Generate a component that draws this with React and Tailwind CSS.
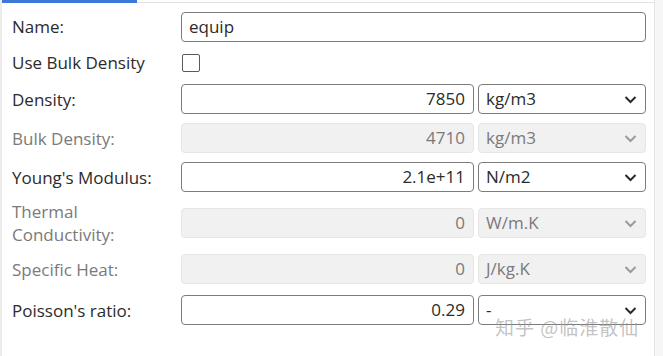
import React from "react";

const rows = [
  { label: "Density:", value: "7850", unit: "kg/m3", enabled: true, mt: "mt-[12px]" },
  { label: "Bulk Density:", value: "4710", unit: "kg/m3", enabled: false, mt: "mt-[9px]" },
  { label: "Young's Modulus:", value: "2.1e+11", unit: "N/m2", enabled: true, mt: "mt-[9px]" },
  { label: ["Thermal", "Conductivity:"], value: "0", unit: "W/m.K", enabled: false, mt: "mt-[16px]" },
  { label: "Specific Heat:", value: "0", unit: "J/kg.K", enabled: false, mt: "mt-[16px]" },
  { label: "Poisson's ratio:", value: "0.29", unit: "-", enabled: true, mt: "mt-[11px]" },
];

function Chevron({ enabled }) {
  return (
    <svg width="13" height="9" viewBox="0 0 13 9" className="shrink-0">
      <path
        d="M1.5 2 L6.5 7 L11.5 2"
        fill="none"
        stroke={enabled ? "#2a2a2a" : "#9a9a9a"}
        strokeWidth="2"
      />
    </svg>
  );
}

function Row({ row }) {
  const on = row.enabled;
  const box = on
    ? "border-[1.5px] border-[#7c7c7c] bg-white text-[#2b2b2b]"
    : "border border-[#e6e6e6] bg-[#f1f1f1] text-[#7a7a7a]";
  return (
    <div className={`flex items-center h-[30px] ${row.mt}`}>
      <div
        className={`w-[169px] shrink-0 leading-[23px] whitespace-nowrap ${
          on ? "text-[#2b2b2b]" : "text-[#7a7a7a]"
        }`}
      >
        {Array.isArray(row.label)
          ? row.label.map((l) => <div key={l}>{l}</div>)
          : row.label}
      </div>
      <div className={`w-[293px] h-[30px] rounded-[4px] flex items-center justify-end pr-[8px] ${box}`}>
        {row.value}
      </div>
      <div className={`ml-[4px] w-[168px] h-[30px] rounded-[4px] flex items-center justify-between pl-[7px] pr-[8px] ${box}`}>
        <span>{row.unit}</span>
        <Chevron enabled={on} />
      </div>
    </div>
  );
}

export default function App() {
  return (
    <div
      className="w-[663px] h-[356px] bg-[#f6f6f6] flex text-[17px] overflow-hidden"
      style={{ fontFamily: '"Open Sans", "Noto Sans", sans-serif' }}
    >
      <div className="relative w-[655px] h-full bg-white border-r border-[#e4e4e4] border-l-[2px] border-l-[#ececec]">
        {/* tab strip line */}
        <div className="flex h-[3px]">
          <div className="w-[135px] bg-[#3b78d8]" />
          <div className="flex-1 border-b border-[#e2e2e2]" />
        </div>

        <div className="pl-[10px] pt-[9px]">
          {/* Name */}
          <div className="flex items-center h-[30px]">
            <div className="w-[169px] shrink-0 text-[#2b2b2b]">Name:</div>
            <div className="w-[465px] h-[30px] rounded-[4px] border-[1.5px] border-[#7c7c7c] flex items-center pl-[7px] text-[#2b2b2b]">
              equip
            </div>
          </div>

          {/* Use Bulk Density */}
          <div className="flex items-center h-[18px] mt-[12px]">
            <div className="w-[170px] shrink-0 text-[#2b2b2b] whitespace-nowrap">Use Bulk Density</div>
            <div className="w-[18px] h-[18px] border-[1.5px] border-[#5a5a5a] rounded-[2px] bg-white" />
          </div>

          {rows.map((r) => (
            <Row key={r.value + r.unit} row={r} />
          ))}
        </div>

        {/* watermark */}
        <div
          className="absolute left-[493px] top-[313px] text-[19px] text-[#9a9a9a]/60 tracking-[1px] pointer-events-none"
          style={{ fontFamily: '"Noto Sans CJK SC", sans-serif' }}
        >
          知乎 @临淮散仙
        </div>
      </div>
    </div>
  );
}
